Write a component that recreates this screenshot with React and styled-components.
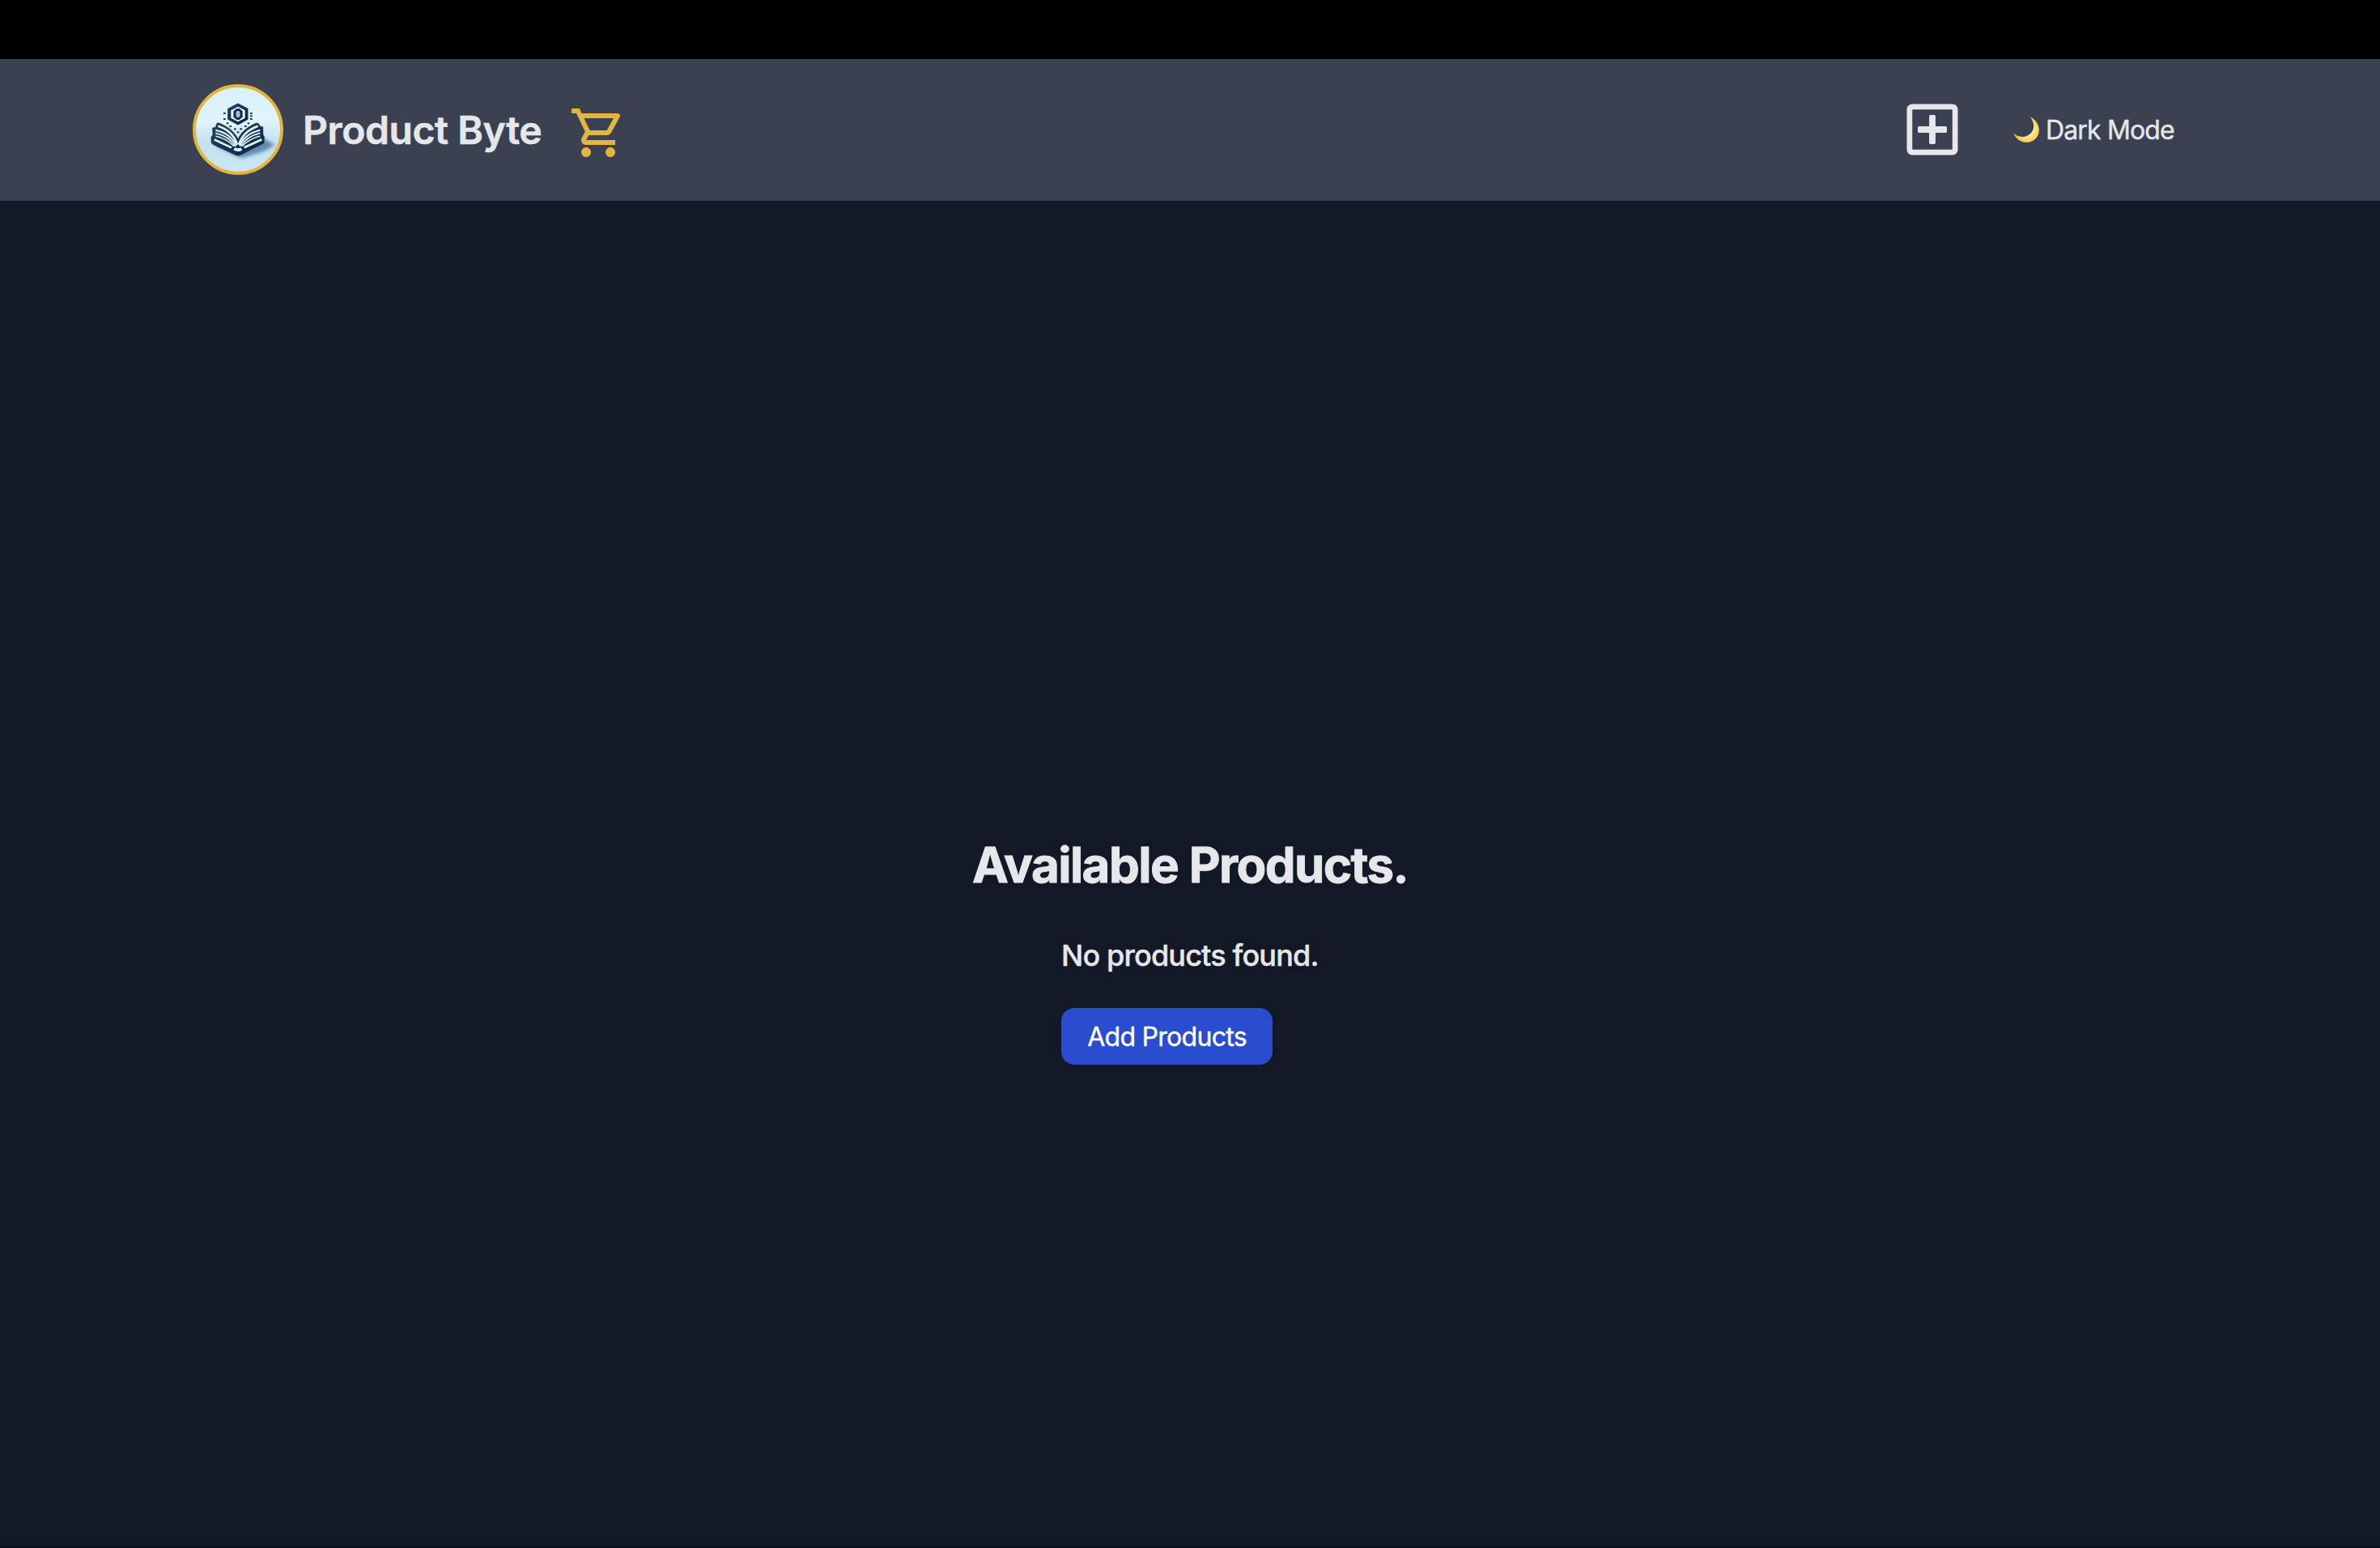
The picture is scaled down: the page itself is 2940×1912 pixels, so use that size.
import React from "react";
import styled, { createGlobalStyle } from "styled-components";
import { MdOutlineShoppingCart } from "react-icons/md";
import { FaRegPlusSquare } from "react-icons/fa";

const GlobalStyle = createGlobalStyle`
  * { box-sizing: border-box; }
  body {
    margin: 0;
    background: #121825;
    color: #e5e7eb;
    font-family: Inter, "Liberation Sans", sans-serif;
    -webkit-font-smoothing: antialiased;
  }
`;

const Page = styled.div`
  display: flex;
  flex-direction: column;
  height: 1912px;
  border-bottom: 1px solid #090b14;
`;

const TopStrip = styled.div`
  height: 73px;
  flex: none;
  background: #000;
`;

const Header = styled.header`
  display: flex;
  align-items: center;
  justify-content: space-between;
  flex: none;
  height: 175px;
  padding: 0 238px;
  background: #3a4150;
`;

const Group = styled.div`
  display: flex;
  align-items: center;
`;

const Logo = styled.svg`
  display: block;
  width: 112px;
  height: 112px;
  margin-top: -1px;
`;

const Brand = styled.h1`
  margin: 0 0 0 24px;
  width: 329px;
  font-size: 48px;
  line-height: 56px;
  font-weight: 600;
  letter-spacing: ${(p) => p.$tracking};
  -webkit-text-stroke: 0.6px currentColor;
  white-space: nowrap;
`;

const CartIcon = styled(MdOutlineShoppingCart)`
  width: 72px;
  height: 72px;
  margin-top: 7px;
  color: #e3b53e;
`;

const AddIcon = styled(FaRegPlusSquare)`
  width: 72px;
  height: 72px;
  margin-top: -1px;
`;

const ModeButton = styled.button`
  display: flex;
  align-items: center;
  gap: 7px;
  width: 216px;
  margin-left: 63px;
  padding: 0;
  border: 0;
  background: none;
  color: inherit;
  font: 400 32px/48px Inter, "Liberation Sans", sans-serif;
  letter-spacing: ${(p) => p.$tracking};
  -webkit-text-stroke: 0.4px currentColor;
  white-space: nowrap;
`;

const Moon = styled.svg`
  width: 34px;
  height: 34px;
  margin-top: -2px;
  flex: none;
`;

const Main = styled.main`
  display: flex;
  flex: 1;
  flex-direction: column;
  align-items: center;
  padding-top: 784px;
`;

const Title = styled.h2`
  margin: 0;
  font-size: 60px;
  line-height: 72px;
  font-weight: 700;
  letter-spacing: ${(p) => p.$tracking};
  word-spacing: 1px;
  -webkit-text-stroke: 0.9px currentColor;
  white-space: nowrap;
`;

const Empty = styled.section`
  display: flex;
  flex-direction: column;
  align-items: flex-start;
  gap: 37px;
  width: 318px;
  margin-top: 48px;
`;

const Message = styled.p`
  margin: 0;
  font-size: 36px;
  line-height: 56px;
  font-weight: 500;
  letter-spacing: ${(p) => p.$tracking};
  -webkit-text-stroke: 0.4px currentColor;
  white-space: nowrap;
`;

const AddButton = styled.button`
  width: 261px;
  height: 70px;
  padding: 2px 0 0;
  border: 0;
  border-radius: 16px;
  background: #2a4dd0;
  color: #fff;
  font: 400 32px/48px Inter, "Liberation Sans", sans-serif;
  letter-spacing: ${(p) => p.$tracking};
  -webkit-text-stroke: 0.4px currentColor;
  white-space: nowrap;
`;

const DOTS = [
  [157, 150], [157, 171], [256, 150], [256, 160], [256, 171],
  [168, 187], [246, 187], [179, 198], [235, 198], [196, 208], [218, 208], [207, 220],
];

function BookLogo() {
  return (
    <Logo viewBox="39 42 336 336">
      <defs>
        <linearGradient id="sky" x1="0" y1="0" x2="0" y2="1">
          <stop offset="0" stopColor="#d9f1fb" />
          <stop offset="0.4" stopColor="#e1f4fc" />
          <stop offset="0.65" stopColor="#c3e1f0" />
          <stop offset="1" stopColor="#cbe7f4" />
        </linearGradient>
        <linearGradient id="ink" x1="0" y1="0" x2="1" y2="1">
          <stop offset="0" stopColor="#1d4567" />
          <stop offset="1" stopColor="#0c2340" />
        </linearGradient>
        <filter id="soft" x="-20%" y="-20%" width="140%" height="140%">
          <feGaussianBlur stdDeviation="7" />
        </filter>
        <clipPath id="disc"><circle cx="207" cy="210" r="157" /></clipPath>
      </defs>
      <circle cx="207" cy="210" r="162" fill="url(#sky)" stroke="#e3b53e" strokeWidth="12" />
      <g clipPath="url(#disc)">
        <path d="M298 240L344 268L300 292L220 316L190 302L120 268Z" fill="#3f6d94" opacity="0.75" filter="url(#soft)" />
      </g>
      <path d="M207 114L243 133V172L207 192L170 172V133Z" fill="url(#ink)" stroke="url(#ink)" strokeWidth="3" strokeLinejoin="round" />
      <path d="M207 125L233 139V167L207 181L181 167V139Z" fill="#f4fbff" />
      <path d="M202 132H212L224 142V164L212 174H202L190 164V142Z" fill="#123152" />
      <path d="M204 141H210L214 145V161L210 165H204L200 161V145Z" fill="#9fc3d8" />
      {DOTS.map(([x, y]) => (
        <rect key={`${x}-${y}`} x={x - 4} y={y - 3} width="8" height="6" fill="#173a5c" />
      ))}
      <path
        d="M128 188Q134 183 142 188C168 200 194 216 207 246C220 216 246 200 272 187Q284 183 288 198L299 200L300 231L304 236L303 260L216 304Q207 309 198 304L112 264L108 256V236L114 231L113 204L124 202Z"
        fill="url(#ink)"
        stroke="#102b49"
        strokeWidth="2"
      />
      <g fill="none" stroke="#e6f4fb" strokeLinecap="butt">
        <path d="M133 197C167 208 194 232 204 266" strokeWidth="8" />
        <path d="M124 212C156 219 186 237 201 270" strokeWidth="6" />
        <path d="M124 223C153 230 181 245 197 272" strokeWidth="5" />
        <path d="M124 234C149 240 173 252 192 272" strokeWidth="4" />
        <path d="M281 197C246 209 221 232 210 266" strokeWidth="8" />
        <path d="M289 212C258 219 228 237 213 270" strokeWidth="6" />
        <path d="M289 223C260 230 233 245 217 272" strokeWidth="5" />
        <path d="M289 234C264 240 241 252 222 272" strokeWidth="4" />
        <path d="M119 247L183 277" strokeWidth="8" />
        <path d="M295 247L230 277" strokeWidth="8" />
        <path d="M193 281Q207 290 220 281" strokeWidth="11" />
      </g>
    </Logo>
  );
}

function MoonIcon() {
  return (
    <Moon viewBox="0 0 34 34">
      <defs>
        <radialGradient id="glow" cx="0.55" cy="0.5" r="0.55">
          <stop offset="0.5" stopColor="#fbe48a" />
          <stop offset="0.8" stopColor="#f4d55c" />
          <stop offset="1" stopColor="#dfb041" />
        </radialGradient>
      </defs>
      <path d="M21.3 1C36 8 36 25 25 31C16.500 35.500 5 32 1 21.300C6.500 26.500 15 28 21.500 22.500C28 17 27.500 8 21.300 1Z" fill="url(#glow)" />
    </Moon>
  );
}

export default function App() {
  return (
    <>
      <GlobalStyle />
      <Page>
        <TopStrip />
        <Header>
          <Group>
            <BookLogo />
            <Brand $tracking="-0.4px">Product Byte</Brand>
            <CartIcon />
          </Group>
          <Group>
            <AddIcon />
            <ModeButton $tracking="-0.85px">
              <MoonIcon />
              <span>Dark Mode</span>
            </ModeButton>
          </Group>
        </Header>
        <Main>
          <Title $tracking="-1.55px">Available Products.</Title>
          <Empty>
            <Message $tracking="-0.82px">No products found.</Message>
            <AddButton $tracking="-0.72px">Add Products</AddButton>
          </Empty>
        </Main>
      </Page>
    </>
  );
}
